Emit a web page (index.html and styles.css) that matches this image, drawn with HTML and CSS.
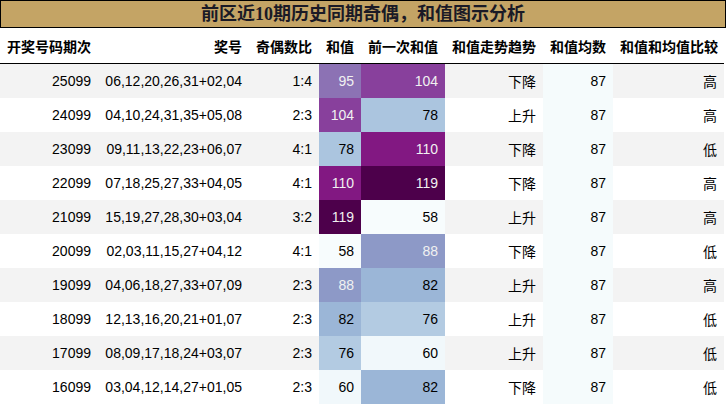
FILE: index.html
```html
<!DOCTYPE html>
<html lang="zh">
<head>
<meta charset="utf-8">
<link rel="stylesheet" href="styles.css">
</head>
<body>
<div class="page">
  <div class="title">前区近10期历史同期奇偶，和值图示分析</div>
  <table class="grid">
    <colgroup>
      <col class="c1"><col class="c2"><col class="c3"><col class="c4"><col class="c5"><col class="c6"><col class="c7"><col class="c8">
    </colgroup>
    <thead>
      <tr><th>开奖号码期次</th><th>奖号</th><th>奇偶数比</th><th>和值</th><th>前一次和值</th><th>和值走势趋势</th><th>和值均数</th><th>和值和均值比较</th></tr>
    </thead>
    <tbody>
      <tr><td>25099</td><td>06,12,20,26,31+02,04</td><td>1:4</td><td class="g95">95</td><td class="g104">104</td><td>下降</td><td class="avg">87</td><td>高</td></tr>
      <tr><td>24099</td><td>04,10,24,31,35+05,08</td><td>2:3</td><td class="g104">104</td><td class="g78">78</td><td>上升</td><td class="avg">87</td><td>高</td></tr>
      <tr><td>23099</td><td>09,11,13,22,23+06,07</td><td>4:1</td><td class="g78">78</td><td class="g110">110</td><td>下降</td><td class="avg">87</td><td>低</td></tr>
      <tr><td>22099</td><td>07,18,25,27,33+04,05</td><td>4:1</td><td class="g110">110</td><td class="g119">119</td><td>下降</td><td class="avg">87</td><td>高</td></tr>
      <tr><td>21099</td><td>15,19,27,28,30+03,04</td><td>3:2</td><td class="g119">119</td><td class="g58">58</td><td>上升</td><td class="avg">87</td><td>高</td></tr>
      <tr><td>20099</td><td>02,03,11,15,27+04,12</td><td>4:1</td><td class="g58">58</td><td class="g88">88</td><td>下降</td><td class="avg">87</td><td>低</td></tr>
      <tr><td>19099</td><td>04,06,18,27,33+07,09</td><td>2:3</td><td class="g88">88</td><td class="g82">82</td><td>上升</td><td class="avg">87</td><td>高</td></tr>
      <tr><td>18099</td><td>12,13,16,20,21+01,07</td><td>2:3</td><td class="g82">82</td><td class="g76">76</td><td>上升</td><td class="avg">87</td><td>低</td></tr>
      <tr><td>17099</td><td>08,09,17,18,24+03,07</td><td>2:3</td><td class="g76">76</td><td class="g60">60</td><td>上升</td><td class="avg">87</td><td>低</td></tr>
      <tr><td>16099</td><td>03,04,12,14,27+01,05</td><td>2:3</td><td class="g60">60</td><td class="g82">82</td><td>下降</td><td class="avg">87</td><td>低</td></tr>
    </tbody>
  </table>
</div>
</body>
</html>
```
FILE: styles.css
```css
html, body {
  margin: 0;
  padding: 0;
  background: #ffffff;
}
.page {
  width: 726px;
  height: 405px;
  overflow: hidden;
  font-family: "Liberation Sans", "Noto Sans CJK SC", sans-serif;
  color: #000;
}
.title {
  box-sizing: border-box;
  height: 28px;
  border: 1px solid #000;
  background: #c4a465;
  color: #1a1a26;
  font-family: "Liberation Serif", "Noto Sans CJK SC", serif;
  font-weight: bold;
  font-size: 18px;
  line-height: 26px;
  text-align: center;
}
.grid {
  width: 724px;
  border-collapse: collapse;
  table-layout: fixed;
  font-size: 14px;
}
.c1 { width: 98px; }
.c2 { width: 151px; }
.c3 { width: 70px; }
.c4 { width: 42px; }
.c5 { width: 84px; }
.c6 { width: 98px; }
.c7 { width: 70px; }
.c8 { width: 111px; }
.grid th, .grid td {
  padding: 0 7px;
  text-align: right;
  white-space: nowrap;
  overflow: hidden;
}
.grid th {
  height: 35px;
  font-weight: bold;
  border-bottom: 1px solid #000;
}
.grid th:first-child { text-align: left; }
.grid td {
  height: 34px;
}
.grid tbody tr:nth-child(odd) { background: #f3f3f3; }
.grid tbody tr:nth-child(even) { background: #ffffff; }
.grid td.avg { background: #f5fbfc; }
.g58 { background: #f7fcfd; color: #000; }
.g60 { background: #f1f8fb; color: #000; }
.g76 { background: #b3cbe2; color: #000; }
.g78 { background: #abc5df; color: #000; }
.g82 { background: #9bb6d7; color: #000; }
.g88 { background: #8d99c7; color: #f1f1f1; }
.g95 { background: #8c72b4; color: #f1f1f1; }
.g104 { background: #88409c; color: #f1f1f1; }
.g110 { background: #821882; color: #f1f1f1; }
.g119 { background: #4d004b; color: #f1f1f1; }
```
